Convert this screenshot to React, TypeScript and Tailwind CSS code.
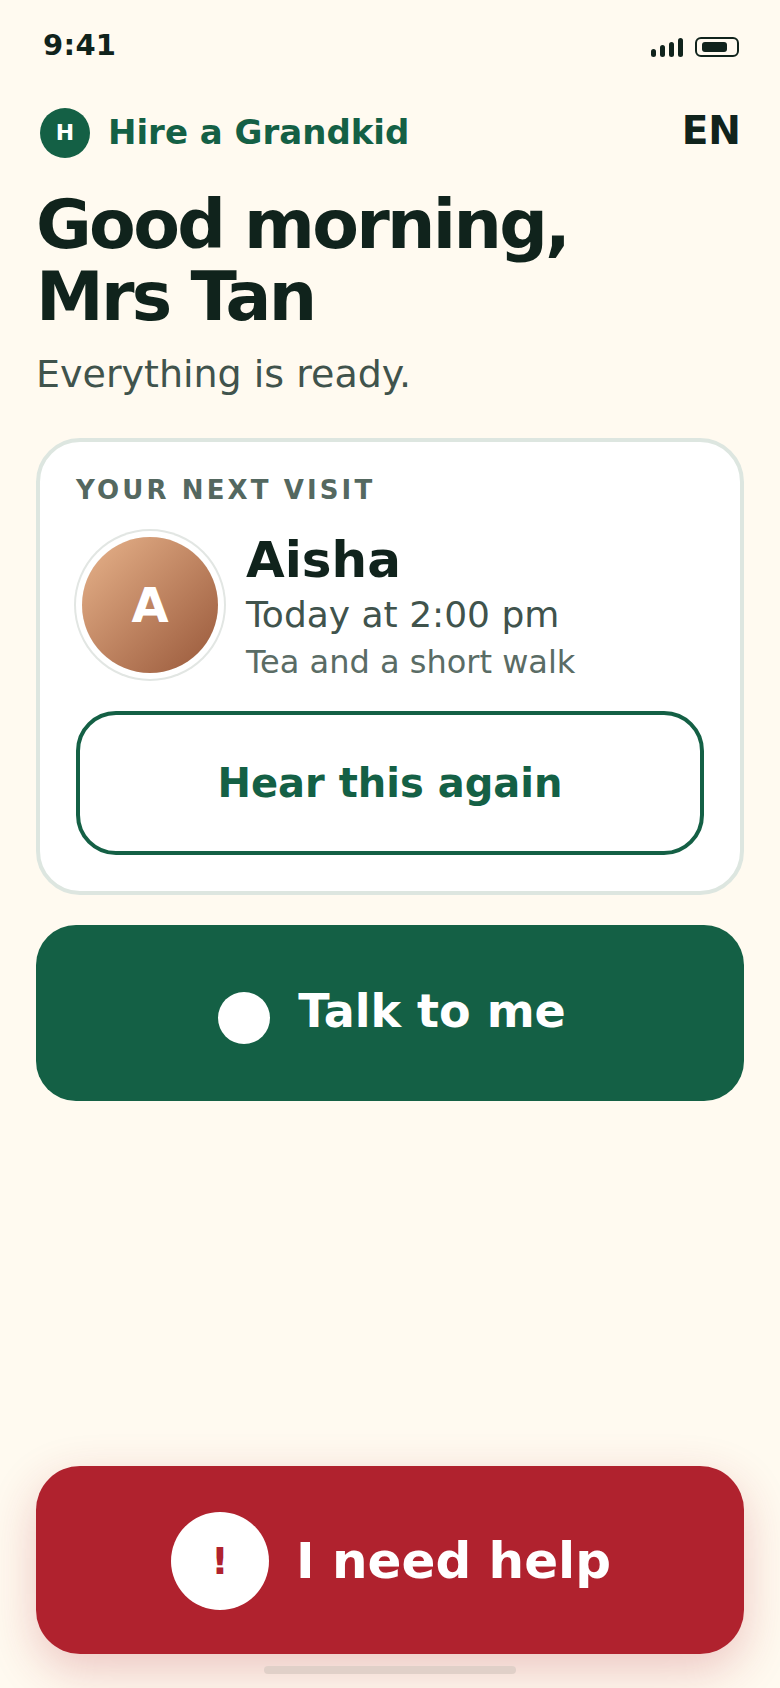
function StatusIcons() {
  return (
    <div className="mt-1 flex items-center gap-3">
      <div className="flex items-end gap-1">
        <span className="h-2 w-[5px] rounded-full bg-[#10231c]" />
        <span className="h-3 w-[5px] rounded-full bg-[#10231c]" />
        <span className="h-[15px] w-[5px] rounded-full bg-[#10231c]" />
        <span className="h-[19px] w-[5px] rounded-full bg-[#10231c]" />
      </div>
      <div className="flex h-5 w-11 items-center rounded-[6px] border-2 border-[#10231c] pl-[5px]">
        <span className="h-[10px] w-[25px] rounded-[3px] bg-[#10231c]" />
      </div>
    </div>
  );
}

export default function App() {
  return (
    <div className="flex h-[1688px] w-[780px] flex-col overflow-hidden bg-[#fffaf0] px-9 font-['DejaVu_Sans',sans-serif] text-[#10231c]">
      <div className="flex items-center justify-between pl-[7px] pr-[5px] pt-[25px]">
        <span className="text-[29px] font-bold leading-[40px] tracking-[0.3px]">9:41</span>
        <StatusIcons />
      </div>

      <header className="mt-[42px] flex items-center justify-between pl-1 pr-[3px]">
        <div className="flex items-center gap-[18px]">
          <div className="flex h-[50px] w-[50px] items-center justify-center rounded-full bg-[#146045] text-[22px] font-bold text-white">
            H
          </div>
          <span className="text-[34px] font-bold text-[#146045]">Hire a Grandkid</span>
        </div>
        <span className="mb-1 text-[39px] font-bold leading-[46px]">EN</span>
      </header>

      <h1 className="mt-[31px] text-[68px] font-bold leading-[72px] tracking-[-2.7px]">
        Good morning,
        <br />
        Mrs Tan
      </h1>
      <p className="mt-[15px] text-[38px] leading-[52px] text-[#40534c]">Everything is ready.</p>

      <section className="mt-[38px] rounded-[44px] border-4 border-[#dde6e0] bg-white px-9 pb-[36px] pt-[32px]">
        <div className="text-[26px] font-bold leading-[32px] tracking-[3.12px] text-[#546860]">YOUR NEXT VISIT</div>
        <div className="mt-[23px] flex items-center gap-7">
          <div className="mb-[10px] ml-[6px] mt-2 flex h-[136px] w-[136px] shrink-0 items-center justify-center rounded-full bg-gradient-to-br from-[#e8b48c] to-[#98583a] text-[48px] font-bold text-white shadow-[0_0_0_6px_#ffffff,0_0_0_8px_#e2e6e3]">
            A
          </div>
          <div className="min-w-0">
            <div className="text-[50px] font-bold leading-[62px]">Aisha</div>
            <div className="text-[36px] leading-[48px] text-[#40534c]">Today at 2:00 pm</div>
            <div className="mt-[2px] text-[32px] leading-[42px] text-[#5a6c65]">Tea and a short walk</div>
          </div>
        </div>
        <button className="mt-[28px] flex h-[144px] w-full items-center justify-center rounded-[40px] border-4 border-[#146045] bg-white text-[40px] font-bold text-[#146045]">
          Hear this again
        </button>
      </section>

      <button className="mt-[30px] flex h-[176px] w-full items-center justify-center gap-7 rounded-[40px] bg-[#146045] pb-1 pl-1 text-[46px] font-bold text-white">
        <span className="mt-[14px] h-[52px] w-[52px] rounded-full bg-white" />
        Talk to me
      </button>

      <button className="mt-auto flex h-[188px] w-full shrink-0 items-center justify-center gap-[27px] rounded-[44px] bg-[#b0222e] pl-[2px] pt-[2px] text-[50px] font-bold text-white shadow-[0_16px_48px_rgba(176,34,46,0.24)]">
        <span className="flex h-[98px] w-[98px] items-center justify-center rounded-full bg-white text-[38px] text-[#b0222e]">!</span>
        I need help
      </button>
      <div className="mb-[14px] mt-[12px] h-2 w-[252px] shrink-0 self-center rounded-full bg-[#e0d0c8]" />
    </div>
  );
}
